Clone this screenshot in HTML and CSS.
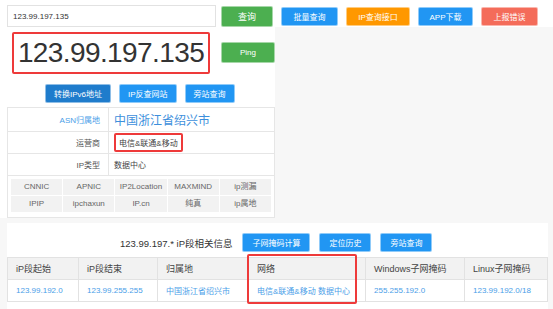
FILE: index.html
```html
<!DOCTYPE html>
<html lang="zh-CN">
<head>
    <meta charset="UTF-8">
    <title>IP查询</title>
    <link rel="stylesheet" href="styles.css">
</head>
<body>

    <!-- 搜索栏 -->
    <div class="top-bar">
        <input type="text" class="search-input" value="123.99.197.135">
        <button class="btn btn-green btn-query">查询</button>
        <button class="btn btn-blue btn-w56">批量查询</button>
        <button class="btn btn-orange btn-w63">IP查询接口</button>
        <button class="btn btn-blue btn-w54">APP下载</button>
        <button class="btn btn-red btn-w56">上报错误</button>
    </div>

    <div class="main-col">
        <div class="ip-row">
            <div class="big-ip">123.99.197.135</div>
            <button class="btn btn-green btn-ping">Ping</button>
        </div>

        <div class="tool-row">
            <button class="btn btn-dark">转换IPv6地址</button>
            <button class="btn btn-blue">IP反查网站</button>
            <button class="btn btn-blue">旁站查询</button>
        </div>

        <div class="info-box">
            <table class="info-table">
                <tr>
                    <td class="label label-blue">ASN归属地</td>
                    <td class="value value-big">中国浙江省绍兴市</td>
                </tr>
                <tr>
                    <td class="label">运营商</td>
                    <td class="value"><span class="mark">电信&amp;联通&amp;移动</span></td>
                </tr>
                <tr>
                    <td class="label">IP类型</td>
                    <td class="value">数据中心</td>
                </tr>
            </table>
            <div class="source-grid">
                <div>CNNIC</div><div>APNIC</div><div>IP2Location</div><div>MAXMIND</div><div>ip测漏</div>
                <div>IPIP</div><div>ipchaxun</div><div>IP.cn</div><div>纯真</div><div>ip属地</div>
            </div>
        </div>
    </div>

    <!-- IP段信息 -->
    <div class="range-panel">
        <div class="range-head">
            <span class="range-title">123.99.197.* iP段相关信息</span>
            <button class="btn btn-blue">子网掩码计算</button>
            <button class="btn btn-blue">定位历史</button>
            <button class="btn btn-blue">旁站查询</button>
        </div>
        <table class="range-table">
            <tr>
                <th class="c1">iP段起始</th>
                <th class="c2">iP段结束</th>
                <th class="c3">归属地</th>
                <th class="c4">网络</th>
                <th class="c5">Windows子网掩码</th>
                <th>Linux子网掩码</th>
            </tr>
            <tr>
                <td>123.99.192.0</td>
                <td>123.99.255.255</td>
                <td>中国浙江省绍兴市</td>
                <td>电信&amp;联通&amp;移动 数据中心</td>
                <td>255.255.192.0</td>
                <td>123.99.192.0/18</td>
            </tr>
        </table>
        <!-- 标注框 -->
        <div class="net-mark"></div>
    </div>

</body>
</html>
```

FILE: styles.css
```css
body { margin: 0; background: #f7f7f7; font-family: "Liberation Sans", "Noto Sans CJK SC", sans-serif; font-size: 8px; color: #333; }

.btn { height: 19px; padding: 0 8px; font-family: inherit; font-size: 8px; color: #fff; border: 1px solid rgba(255,255,255,0.5); border-radius: 2px; cursor: pointer; }
.btn-green { background: #4caf50; }
.btn-blue { background: #2196f3; }
.btn-dark { background: #1f7ccc; }
.btn-orange { background: #ff9800; }
.btn-red { background: #f46c5a; }

.top-bar { display: flex; align-items: center; padding: 5px 0 0 7px; background: #fff; }
.search-input { width: 197px; height: 20px; padding: 0 5px; margin-right: 5px; border: 1px solid #e2e2e2; font-family: inherit; font-size: 8px; color: #333; }
.btn-query { width: 52px; height: 21px; margin-right: 8px; font-size: 9px; }
.btn-w56 { width: 57px; margin-right: 8px; }
.btn-w63 { width: 64px; margin-right: 8px; }
.btn-w54 { width: 55px; margin-right: 8px; }

.main-col { width: 268px; padding: 0 0 0 7px; background: #fff; }

.ip-row { display: flex; align-items: center; padding: 5px 0 0 5px; }
.big-ip { width: 194px; height: 38px; border: 2px solid #ee3a3a; border-radius: 2px; font-size: 28px; letter-spacing: -0.6px; line-height: 38px; text-align: center; color: #333; }
.btn-ping { width: 54px; height: 21px; margin-left: 11px; margin-top: -2px; }

.tool-row { display: flex; gap: 8px; padding: 10px 0 4px 38px; }
.tool-row .btn { height: 19px; padding: 0 8px; }

.info-box { border: 1px solid #e6e6e6; background: #fff; padding-bottom: 5px; }
.info-table { width: 100%; border-collapse: collapse; }
.info-table td { border-bottom: 1px solid #e6e6e6; height: 21px; padding: 0; }
.info-table .label { width: 92px; text-align: right; padding-right: 8px; border-right: 1px solid #e6e6e6; color: #555; }
.info-table .label-blue { color: #4a9ee8; }
.info-table .value { padding-left: 5px; color: #444; }
.info-table .value-big { font-size: 12px; color: #3d8fdc; height: 23px; }
.mark { display: inline-block; padding: 2px 3px; border: 2px solid #ee3a3a; border-radius: 2px; }

.source-grid { display: grid; grid-template-columns: repeat(5, 1fr); gap: 1px; margin: 3px 3px 0; }
.source-grid div { background: #f2f2f2; height: 16px; line-height: 16px; text-align: center; color: #666; }

.range-panel { position: relative; margin: 5px 5px 0 7px; background: #fff; padding-top: 10px; height: 90px; }
.range-head { display: flex; align-items: center; gap: 9px; padding-left: 113px; margin-bottom: 5px; }
.range-title { font-size: 9.5px; color: #333; margin-right: 1px; }
.range-head .btn { height: 19px; padding: 0 9px; }

.range-table { width: 100%; border-collapse: collapse; }
.range-table th, .range-table td { border: 1px solid #e2e2e2; height: 21px; padding: 0 0 0 8px; text-align: left; font-weight: normal; }
.range-table th { background: #f2f2f2; font-size: 9px; color: #444; }
.range-table td { color: #4a9ee8; }
.c1 { width: 62px; }
.c2 { width: 70px; }
.c3 { width: 82px; }
.c4 { width: 108px; }
.c5 { width: 90px; }

.net-mark { position: absolute; left: 240px; top: 31px; width: 106px; height: 46px; border: 2px solid #ee3a3a; border-radius: 2px; }
```
